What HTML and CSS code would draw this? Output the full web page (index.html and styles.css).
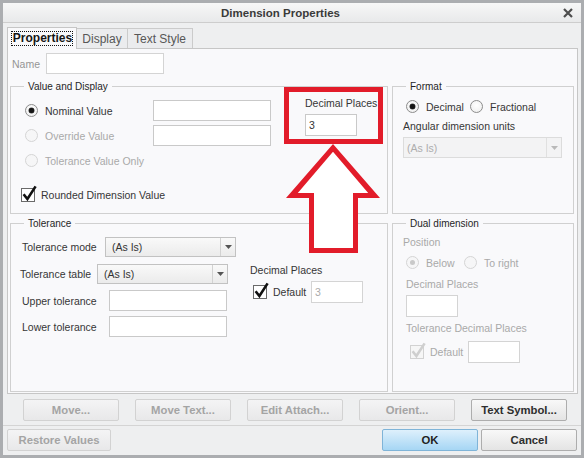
FILE: index.html
```html
<!DOCTYPE html>
<html>
<head>
<meta charset="utf-8">
<title>Dimension Properties</title>
<link rel="stylesheet" href="styles.css">
</head>
<body>
<div class="window">
  <div class="titlebar">
    <div class="title">Dimension Properties</div>
    <div class="close">
      <svg width="10" height="10" viewBox="0 0 10 10"><path d="M1 1 L9 9 M9 1 L1 9" stroke="#4d4d4d" stroke-width="2.2"/></svg>
    </div>
  </div>

  <div class="tabs">
    <div class="tab active"><span class="focus">Properties</span></div>
    <div class="tab display">Display</div>
    <div class="tab textstyle">Text Style</div>
  </div>

  <div class="page">
    <div class="name-row">
      <span class="name-label">Name</span>
      <span class="field name-field"></span>
    </div>

    <div class="groups">
      <!-- Value and Display -->
      <section class="group">
        <div class="legend">Value and Display</div>
        <div class="vd-body">
          <div class="vd-options">
            <div class="value-grid">
              <span class="radio on"></span><span class="lbl">Nominal Value</span><span class="field value-field"></span>
              <span class="radio off"></span><span class="lbl dim">Override Value</span><span class="field value-field"></span>
              <span class="radio off"></span><span class="lbl dim">Tolerance Value Only</span><span></span>
            </div>
            <div class="check-row rounded">
              <svg class="cb" width="14" height="14" viewBox="0 0 14 14"><rect x="0.5" y="0.5" width="13" height="13" fill="#fff" stroke="#6a6a6a"/><path d="M2.6 6.2 L6.4 11 L14.6 -1.6" fill="none" stroke="#111" stroke-width="2.6"/></svg>
              <span class="lbl">Rounded Dimension Value</span>
            </div>
          </div>
          <div class="decimal">
            <div class="lbl line">Decimal Places</div>
            <div class="field small-field">3</div>
          </div>
        </div>
      </section>

      <!-- Format -->
      <section class="group">
        <div class="legend">Format</div>
        <div class="fmt-body">
          <div class="radio-row fmt-radios">
            <span class="radio on"></span><span class="lbl rlabel w44">Decimal</span>
            <span class="radio off-en"></span><span class="lbl rlabel">Fractional</span>
          </div>
          <div class="lbl line angular">Angular dimension units</div>
          <div class="select disabled angular-select">
            <span class="select-text">(As Is)</span>
            <span class="select-btn"><svg width="7" height="4" viewBox="0 0 7 4"><path d="M0 0 H7 L3.5 4 Z" fill="#b9b9b9"/></svg></span>
          </div>
        </div>
      </section>

      <!-- Tolerance -->
      <section class="group">
        <div class="legend">Tolerance</div>
        <div class="tol-body">
          <div class="tol-left">
            <div class="tol-row r1">
              <span class="lbl tl-mode">Tolerance mode</span>
              <div class="select tol-select">
                <span class="select-text">(As Is)</span>
                <span class="select-btn"><svg width="7" height="4" viewBox="0 0 7 4"><path d="M0 0 H7 L3.5 4 Z" fill="#555"/></svg></span>
              </div>
            </div>
            <div class="tol-row r2">
              <span class="lbl tl-table">Tolerance table</span>
              <div class="select tol-select">
                <span class="select-text">(As Is)</span>
                <span class="select-btn"><svg width="7" height="4" viewBox="0 0 7 4"><path d="M0 0 H7 L3.5 4 Z" fill="#555"/></svg></span>
              </div>
            </div>
            <div class="tol-row r3">
              <span class="lbl tl-bound">Upper tolerance</span>
              <span class="field bound-field"></span>
            </div>
            <div class="tol-row r4">
              <span class="lbl tl-bound">Lower tolerance</span>
              <span class="field bound-field"></span>
            </div>
          </div>
          <div class="tol-right">
            <div class="lbl line">Decimal Places</div>
            <div class="check-row default-row">
              <svg class="cb" width="14" height="14" viewBox="0 0 14 14"><rect x="0.5" y="0.5" width="13" height="13" fill="#fff" stroke="#6a6a6a"/><path d="M2.6 6.2 L6.4 11 L14.6 -1.6" fill="none" stroke="#111" stroke-width="2.6"/></svg>
              <span class="lbl default-lbl">Default</span>
              <span class="field small-field grey-text">3</span>
            </div>
          </div>
        </div>
      </section>

      <!-- Dual dimension -->
      <section class="group">
        <div class="legend">Dual dimension</div>
        <div class="dual-body">
          <div class="lbl line dim position">Position</div>
          <div class="radio-row dual-radios">
            <span class="radio dis-on"></span><span class="lbl dim rlabel w38">Below</span>
            <span class="radio off"></span><span class="lbl dim rlabel">To right</span>
          </div>
          <div class="lbl line dim indent dual-dec">Decimal Places</div>
          <span class="field small-field indent dual-field"></span>
          <div class="lbl line dim indent dual-tol">Tolerance Decimal Places</div>
          <div class="check-row dual-default">
            <svg class="cb" width="14" height="14" viewBox="0 0 14 14"><rect x="0.5" y="0.5" width="13" height="13" fill="#f6f6f6" stroke="#d2d2d2"/><path d="M2.6 6.2 L6.4 11 L14.6 -1.6" fill="none" stroke="#cfcfcf" stroke-width="2.6"/></svg>
            <span class="lbl dim default-lbl">Default</span>
            <span class="field small-field"></span>
          </div>
        </div>
      </section>
    </div>
  </div>

  <div class="btn-row top-row">
    <span class="btn">Move...</span>
    <span class="btn">Move Text...</span>
    <span class="btn">Edit Attach...</span>
    <span class="btn">Orient...</span>
    <span class="btn enabled">Text Symbol...</span>
  </div>
  <div class="sep"></div>
  <div class="btn-row bottom-row">
    <span class="btn restore">Restore Values</span>
    <span class="btn ok">OK</span>
    <span class="btn enabled cancel">Cancel</span>
  </div>
</div>

<!-- callout: frame round the decimal places field and an arrow pointing up at it -->
<svg class="callout" width="584" height="458" viewBox="0 0 584 458">
  <rect x="286.5" y="89.5" width="94" height="52" fill="none" stroke="#e21c2a" stroke-width="5"/>
  <polygon points="333,144 380,198 358,198 358,253 309,253 309,198 286,198" fill="#e21c2a"/>
  <polygon points="333,151.7 368.2,193 353,193 353,248 314,248 314,193 297.8,193" fill="#ffffff"/>
</svg>
</body>
</html>
```

FILE: styles.css
```css
* {
  box-sizing: border-box;
}

html,
body {
  margin: 0;
  padding: 0;
}

body {
  position: relative;
  width: 584px;
  height: 458px;
  overflow: hidden;
  font-family: "Liberation Sans", Arial, sans-serif;
  font-size: 10.5px;
  color: #363636;
  background: #ffffff;
}

/* dialog frame */
.window {
  width: 584px;
  height: 458px;
  border: 3px solid #abadb0;
  background: #eeeff0;
  display: flex;
  flex-direction: column;
}

.titlebar {
  flex: none;
  height: 20px;
  display: flex;
  align-items: center;
  background: linear-gradient(#f7f7f7, #e8e9ea);
  border-bottom: 1px solid #cdcdcd;
}

.title {
  flex: 1;
  text-align: center;
  font-size: 11.5px;
  font-weight: bold;
  color: #3a3a3a;
}

.close {
  width: 20px;
  margin-right: 3px;
  display: flex;
  justify-content: center;
  align-items: center;
}

/* tab strip */
.tabs {
  flex: none;
  height: 25px;
  display: flex;
  align-items: flex-end;
  padding-left: 4px;
}

.tab {
  height: 20px;
  border: 1px solid #cbcbcb;
  border-left: none;
  border-bottom: none;
  background: #ebecee;
  font-size: 12px;
  color: #575757;
  display: flex;
  align-items: center;
  justify-content: center;
}

.tab.active {
  position: relative;
  z-index: 1;
  width: 70px;
  height: 22px;
  margin-bottom: -1px;
  border-left: 1px solid #c6c6c6;
  border-color: #c6c6c6;
  background: #f9f9fb;
  color: #151515;
  font-weight: bold;
}

.focus {
  border: 1px dotted #111;
  line-height: 13px;
  padding: 0 0 0 1px;
}

.tab.display {
  width: 51px;
}

.tab.textstyle {
  width: 65px;
}

/* property page */
.page {
  flex: none;
  width: 571px;
  height: 346px;
  margin-left: 4px;
  border: 1px solid #c6c6c6;
  background: #f9f9fb;
  padding: 4px 3px 1px 2px;
}

.name-row {
  height: 21px;
  margin-left: 2px;
  display: flex;
  align-items: center;
}

.name-label {
  width: 34px;
  color: #959595;
}

.field {
  background: #ffffff;
  border: 1px solid #c9c9c9;
  font-size: 10.5px;
  color: #333;
  padding-left: 3px;
  display: flex;
  align-items: center;
}

.name-field {
  width: 118px;
  height: 21px;
  border-color: #d4d4d4;
}

.groups {
  margin-top: 12px;
  display: grid;
  grid-template-columns: 378px 182px;
  grid-template-rows: 128px 169px;
  column-gap: 4px;
  row-gap: 9px;
}

.group {
  border: 1px solid #d0d0d0;
}

.legend {
  width: max-content;
  margin: -7px 0 0 13px;
  padding: 0 4px;
  background: #f9f9fb;
  font-size: 10px;
  line-height: 13px;
  color: #1f1f1f;
}

.lbl {
  white-space: nowrap;
}

.line {
  line-height: 13px;
}

.dim {
  color: #a9a9a9;
}

/* radio buttons */
.radio {
  display: block;
  position: relative;
  width: 13px;
  height: 13px;
  border-radius: 50%;
  border: 1px solid #8c8c8c;
  background: radial-gradient(circle at 50% 40%, #ffffff, #ececec);
  flex: none;
}

.radio.on::after {
  content: "";
  position: absolute;
  left: 3px;
  top: 3px;
  width: 5px;
  height: 5px;
  border-radius: 50%;
  background: #151515;
  box-shadow: 0 0 0 0.5px #444;
}

.radio.off {
  border-color: #d5d5d5;
  background: #f6f6f7;
}

.radio.off-en {
  border-color: #8c8c8c;
}

.radio.dis-on {
  border-color: #d5d5d5;
  background: #f6f6f7;
}

.radio.dis-on::after {
  content: "";
  position: absolute;
  left: 3px;
  top: 3px;
  width: 5px;
  height: 5px;
  border-radius: 50%;
  background: #c9c9c9;
}

.radio-row {
  height: 13px;
  display: flex;
  align-items: center;
}

.rlabel {
  margin-left: 7px;
}

.w44 {
  width: 44px;
}

.w38 {
  width: 38px;
}

/* checkboxes */
.check-row {
  display: flex;
  align-items: center;
}

.cb {
  flex: none;
  overflow: visible;
}

/* value and display */
.vd-body {
  display: flex;
  padding-left: 10px;
}

.vd-options {
  margin-top: 7px;
}

.value-grid {
  margin-left: 4px;
  display: grid;
  grid-template-columns: 13px 101px 118px;
  grid-auto-rows: 21px;
  column-gap: 7px;
  row-gap: 4px;
  align-items: center;
}

.value-field {
  height: 21px;
}

.rounded {
  margin-top: 17px;
  height: 14px;
  gap: 6px;
}

.decimal {
  margin-left: 34px;
  margin-top: 4px;
}

.small-field {
  width: 52px;
  height: 22px;
}

.decimal .small-field {
  margin-top: 4px;
}

/* format */
.fmt-body {
  padding-left: 10px;
}

.fmt-radios {
  margin-top: 7px;
  margin-left: 3px;
}

.angular {
  margin-top: 7px;
}

.select {
  display: flex;
  align-items: stretch;
  border: 1px solid #c2c2c2;
  background: linear-gradient(#f9f9f9, #ebebeb);
}

.select-text {
  flex: 1;
  display: flex;
  align-items: center;
  padding-left: 6px;
  color: #333;
}

.select-btn {
  width: 15px;
  border-left: 1px solid #d2d2d2;
  display: flex;
  align-items: center;
  justify-content: center;
}

.select.disabled {
  border-color: #dcdcdc;
  background: #f3f3f4;
}

.select.disabled .select-text {
  color: #adadad;
  padding-left: 3px;
}

.select.disabled .select-btn {
  border-left-color: #e0e0e0;
}

.angular-select {
  margin-top: 4px;
  width: 159px;
  height: 21px;
}

/* tolerance */
.tol-body {
  display: flex;
}

.tol-left {
  width: 226px;
}

.tol-row {
  display: flex;
  align-items: center;
}

.tol-row.r1 {
  margin-top: 7px;
  padding-left: 11px;
  height: 20px;
}

.tol-row.r2 {
  margin-top: 7px;
  padding-left: 9px;
  height: 20px;
}

.tol-row.r3 {
  margin-top: 6px;
  padding-left: 11px;
  height: 21px;
}

.tol-row.r4 {
  margin-top: 5px;
  padding-left: 11px;
  height: 21px;
}

.tl-mode {
  width: 83px;
}

.tl-table {
  width: 77px;
}

.tl-bound {
  width: 87px;
}

.tol-select {
  width: 131px;
  height: 20px;
}

.bound-field {
  width: 118px;
  height: 21px;
}

.tol-right {
  margin-left: 13px;
  margin-top: 34px;
}

.default-row {
  margin-top: 4px;
  height: 22px;
  padding-left: 3px;
}

.default-lbl {
  width: 38px;
  margin-left: 6px;
}

.grey-text {
  color: #aaaaaa;
  border-color: #d4d4d4;
}

/* dual dimension */
.dual-body {
  padding-left: 10px;
}

.position {
  margin-top: 6px;
}

.dual-radios {
  margin-top: 7px;
  margin-left: 3px;
}

.indent {
  margin-left: 3px;
}

.dual-dec {
  margin-top: 9px;
}

.dual-field {
  margin-top: 4px;
  border-color: #d4d4d4;
}

.dual-tol {
  margin-top: 5px;
}

.dual-default {
  margin-top: 6px;
  margin-left: 7px;
  height: 22px;
}

.dual-default .small-field {
  border-color: #d4d4d4;
}

/* command buttons */
.btn-row {
  flex: none;
  height: 22px;
  display: flex;
}

.top-row {
  margin-top: 5px;
  padding-left: 20px;
  gap: 16px;
}

.sep {
  flex: none;
  height: 1px;
  margin: 4px 0 3px;
  background: #d4d4d4;
}

.bottom-row {
  padding: 0 4px;
}

.btn {
  width: 96px;
  height: 22px;
  border: 1px solid #d2d2d2;
  border-radius: 2px;
  background: linear-gradient(#f4f4f5, #e8e8e9);
  font-size: 11.3px;
  font-weight: bold;
  color: #a4a4a4;
  display: flex;
  align-items: center;
  justify-content: center;
}

.btn.enabled {
  color: #2e2e2e;
  border-color: #adadad;
  background: linear-gradient(#f8f8f8, #e4e4e4);
}

.btn.restore {
  width: 104px;
}

.btn.ok {
  margin-left: auto;
  color: #1f1f1f;
  border-color: #7fb4d8;
  background: linear-gradient(#def0fc, #a6d6f4);
}

.btn.cancel {
  margin-left: 3px;
}

/* red callout drawn over the dialog */
.callout {
  position: absolute;
  left: 0;
  top: 0;
  pointer-events: none;
}
```
